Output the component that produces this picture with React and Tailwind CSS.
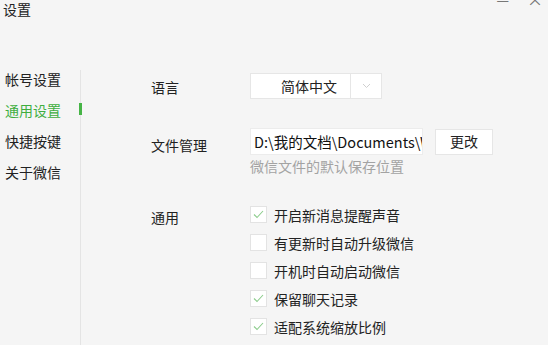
import React from "react";

const font = { fontFamily: '"Noto Sans CJK SC", "Noto Sans", sans-serif' };

const menu = ["帐号设置", "通用设置", "快捷按键", "关于微信"];

const options = [
  { label: "开启新消息提醒声音", checked: true },
  { label: "有更新时自动升级微信", checked: false },
  { label: "开机时自动启动微信", checked: false },
  { label: "保留聊天记录", checked: true },
  { label: "适配系统缩放比例", checked: true },
];

const Check = ({ checked }) => (
  <div className="w-[17px] h-[17px] bg-white border border-[#e3e3e3] flex items-center justify-center shrink-0">
    {checked ? (
      <svg width="11" height="9" viewBox="0 0 11 9">
        <path d="M1 4.5 L4 7.5 L10 1" fill="none" stroke="#8ccc8c" strokeWidth="1.1" />
      </svg>
    ) : null}
  </div>
);

export default function App() {
  return (
    <div className="w-[548px] h-[345px] bg-[#f5f5f5] overflow-hidden relative text-[#222]" style={font}>
      <div className="absolute right-[5px] -top-[13px] flex items-center gap-[18px] text-[#777]">
        <span className="text-[14px]">—</span>
        <span className="text-[16px]">×</span>
      </div>

      <div className="h-[70px] pl-[3px] text-[14px] leading-[18px]">设置</div>

      <div className="flex h-[275px]">
        <div className="w-[81px] shrink-0 border-r border-[#e4e4e4] flex flex-col gap-[13px]">
          {menu.map((item, index) => (
            <div key={item} className="flex justify-between items-start h-[18px]">
              <span className={`pl-[5px] text-[14px] leading-[18px] ${index === 1 ? "text-[#3fae3f]" : ""}`}>{item}</span>
              {index === 1 ? <span className="w-[3px] h-[12px] mt-[2px] -mr-[2px] bg-[#46b446]"></span> : null}
            </div>
          ))}
        </div>

        <div className="flex-1 pl-[70px] pt-[3px] text-[14px]">
          <div className="flex items-center">
            <div className="w-[99px] pt-[3px]">语言</div>
            <div className="flex w-[132px] h-[26px] bg-white border border-[#e6e6e6]">
              <div className="w-[99px] pl-[30px] leading-[24px]">简体中文</div>
              <div className="flex-1 border-l border-[#e6e6e6] flex items-center justify-center">
                <svg width="9" height="6" viewBox="0 0 9 6">
                  <path d="M1 1 L4.5 4.5 L8 1" fill="none" stroke="#cfcfcf" strokeWidth="1" />
                </svg>
              </div>
            </div>
          </div>

          <div className="flex mt-[29px]">
            <div className="w-[99px] pt-[7px]">文件管理</div>
            <div>
              <div className="flex items-center gap-[12px]">
                <div className="w-[173px] h-[27px] bg-white border border-[#ececec] overflow-hidden whitespace-nowrap pl-[3px] leading-[25px] text-[14.5px] text-[#111]">
                  D:\我的文档\Documents\W
                </div>
                <div className="w-[58px] h-[26px] bg-white border border-[#e6e6e6] flex items-center justify-center">更改</div>
              </div>
              <div className="mt-[2px] text-[14px] text-[#a3a3a3] leading-[18px]">微信文件的默认保存位置</div>
            </div>
          </div>

          <div className="flex mt-[31px]">
            <div className="w-[99px] pt-[1px]">通用</div>
            <div className="flex flex-col gap-[11px]">
              {options.map((opt) => (
                <div key={opt.label} className="flex items-center gap-[7px] h-[17px]">
                  <Check checked={opt.checked} />
                  <span className="leading-[18px]">{opt.label}</span>
                </div>
              ))}
            </div>
          </div>
        </div>
      </div>
    </div>
  );
}
